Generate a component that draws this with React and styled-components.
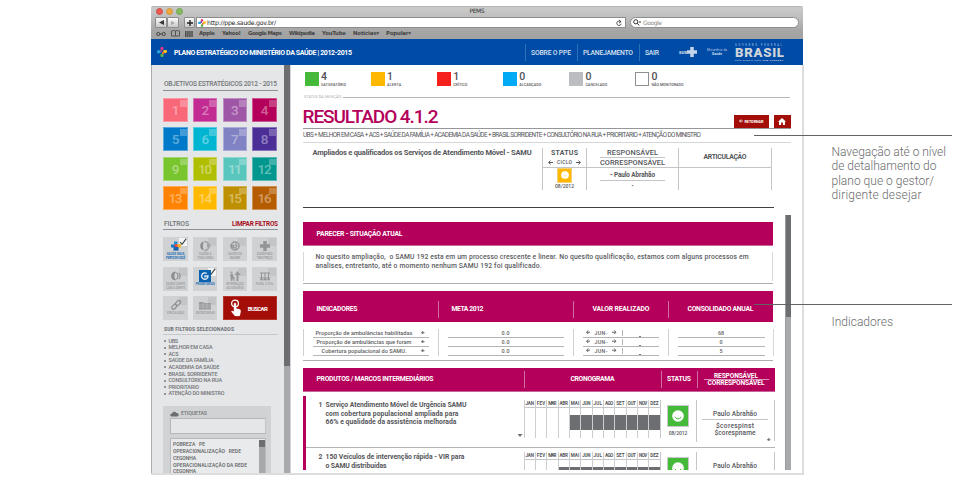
import React, { useLayoutEffect, useRef, useState } from "react";
import styled, { createGlobalStyle } from "styled-components";

const Global = createGlobalStyle`
  * { box-sizing: border-box; }
  body { margin: 0; background: #fff; font-family: Roboto, "Noto Sans", sans-serif; color: #55565a; overflow: hidden; }
`;

const MAGENTA = "#b4005a";
const LINE = "#c4c5c7";

/* Text */
const Label = styled.span`
  display: inline-block;
  flex: none;
  white-space: pre;
  font-size: ${(p) => p.$size || 7}px;
  font-weight: ${(p) => p.$weight || 400};
  line-height: ${(p) => p.$lh || 9}px;
  color: ${(p) => p.$color || "inherit"};
  font-family: ${(p) => p.$font || "inherit"};
`;

// Tracks the text out or in so that it spans the given width.
function Text({ w, size, weight, lh, color, font, children }) {
  const ref = useRef(null);
  const [track, setTrack] = useState(0);
  useLayoutEffect(() => {
    if (!w) return;
    const fit = () => {
      const el = ref.current;
      if (!el) return;
      const n = Math.max(1, el.textContent.length);
      el.style.letterSpacing = "0px";
      el.style.marginRight = "0px";
      const v = (w - el.getBoundingClientRect().width) / Math.max(1, n - 1);
      el.style.letterSpacing = v + "px";
      el.style.marginRight = -v + "px";
      setTrack(v);
    };
    fit();
    document.fonts?.ready.then(fit);
  }, [w, children]);
  return (
    <Label ref={ref} $size={size} $weight={weight} $lh={lh} $color={color} $font={font}
      style={w ? { letterSpacing: track, marginRight: -track } : undefined}>
      {children}
    </Label>
  );
}

/* Page frame */
const Page = styled.div`
  position: relative;
  display: flex;
  width: 956px;
  height: 480px;
  padding: 6px 0 0 151px;
  overflow: hidden;
`;
const Window = styled.div`width: 653px; height: 469px; flex: none; display: flex; flex-direction: column;`;

/* Browser chrome */
const Chrome = styled.div`
  height: 33px;
  width: 652px;
  padding: 0 4px;
  background: linear-gradient(#cbcbcb 0, #bcbcbc 12px, #a5a5a5 24px, #a2a2a2 100%);
  border-top: 1px solid #b4b4b4;
  border-radius: 2px 2px 0 0;
`;
const TitleBar = styled.div`display: grid; grid-template-columns: 1fr auto 1fr; height: 8px; align-items: center;`;
const Lights = styled.div`display: flex; gap: 3px; padding-left: 1px;`;
const Light = styled.i`
  width: 7px; height: 7px; border-radius: 50%;
  background: ${(p) => p.$c};
  border: 1px solid ${(p) => p.$b};
`;
const Toolbar = styled.div`display: flex; height: 11px; margin-top: 2px;`;
const NavButtons = styled.div`display: flex; width: 24px; margin-right: 5px;`;
const ToolButton = styled.div`
  width: 12px; height: 11px; border: 1px solid #8d8d8d; border-radius: 1px;
  background: linear-gradient(#fafafa, #c9c9c9);
  display: flex; align-items: center; justify-content: center;
`;
const Address = styled.div`
  flex: none; width: 430px; height: 11px; margin-left: 1px; background: #fff; border: 1px solid #8d8d8d;
  display: flex; align-items: center; justify-content: space-between; padding: 0 3px 0 1px;
`;
const AddressText = styled.div`display: flex; align-items: center; gap: 1px;`;
const Search = styled.div`
  flex: none; width: 169px; height: 11px; margin-left: 4px; background: #fff; border: 1px solid #8d8d8d; border-radius: 6px;
  display: flex; align-items: center; gap: 2px; padding-left: 2px;
`;
const Bookmarks = styled.div`display: flex; align-items: center; height: 11px; padding-left: 1px;`;
const BookmarkIcons = styled.div`display: flex; gap: 5px; align-items: center; width: 43px; flex: none;`;
const Bookmark = styled.div`width: ${(p) => p.$w}px; flex: none; display: flex;`;

/* Blue header */
const Header = styled.header`
  height: 26px; width: 652px; background: #004ba6; color: #fff; display: flex; align-items: center; padding-left: 6px;
`;
const HeaderTitle = styled.div`width: 358px; padding-left: 7px; display: flex; height: 26px; padding-top: 9.5px; flex: none;`;
const MenuItem = styled.div`
  width: ${(p) => p.$w}px; height: 17px; padding-left: 5px; border-left: 1px solid #2f70bb;
  display: flex; align-items: center; padding-top: 2px; flex: none;
`;
const Sus = styled.div`display: flex; align-items: center; width: 27px; flex: none;`;
const Ministry = styled.div`width: 29px; display: flex; flex-direction: column; align-items: center; padding-right: 7px; flex: none;`;
const Brasil = styled.div`width: 49px; display: flex; flex-direction: column; align-items: flex-start; flex: none; margin-top: 2px;`;

/* Body */
const Body = styled.div`
  display: flex; height: 410px; border: solid #dcddde; border-width: 0 2px 2px 0; background: #fff;
`;
const Sidebar = styled.aside`
  width: 133px; flex: none; background: #e4e6e8; border-left: 1px solid #a9abae; padding: 13px 0 0 11px; overflow: hidden; color: #737477;
`;
const SideHead = styled.div`
  width: 115px; height: ${(p) => p.$h || 12.5}px; margin-top: ${(p) => p.$mt || 0}px; padding: 2px 0 0 1px;
  border-bottom: ${(p) => p.$b || 1}px solid ${(p) => p.$bc || "#8f9093"};
  display: flex; justify-content: space-between; align-items: center;
`;
const TileGrid = styled.div`
  display: grid; grid-template-columns: repeat(4, 24.3px); grid-auto-rows: 24px; gap: ${(p) => p.$gap}px 5.4px; margin: 7.5px 0 0 .4px;
`;
const Tile = styled.div`
  background: ${(p) => p.$c}; border: 1px solid #ffffff55; position: relative;
  display: flex; align-items: center; justify-content: center; padding-top: 1px; color: #ffffff66;
  &::after { content: ""; position: absolute; right: 0; top: 1px; width: 7px; height: 6.5px; background: #ffffff40; }
`;
const Filter = styled.div`
  background: #cfd1d3; position: relative; display: flex; flex-direction: column; align-items: center; padding-top: 3px;
  color: ${(p) => (p.$on ? "#1a6fb8" : "#9fa1a3")};
  svg { display: block; position: relative; }
`;
const Corner = styled.div`position: absolute; right: 1px; top: 1px; width: 8px; height: 8px; background: ${(p) => (p.$on ? "#f4f4f4" : "#c3c5c6")};`;
const BuscarButton = styled.div`
  grid-column: span 2; background: #a30f08; border: 1px solid #b5332d; color: #fff; display: flex; align-items: center; padding-left: 6px; gap: 6px;
`;
const SubList = styled.ul`list-style: none; margin: 3px 0 0 1px; padding: 0; height: 68.5px;`;
const SubItem = styled.li`
  display: flex; align-items: center; height: 6.6px; gap: 2.5px;
  &::before { content: ""; width: 2px; height: 2px; border-radius: 1px; background: #77787b; }
`;
const TagPanel = styled.div`width: 108px; height: 70px; background: #d0d2d4; padding: 3px 6px 0 7px;`;
const TagTitle = styled.div`display: flex; align-items: center; gap: 2px; height: 9px;`;
const TagInput = styled.div`height: 16px; width: 96px; border: 1px solid #b6b8ba; border-right-color: #c2c4c6; background: #e4e6e8;`;
const TagList = styled.div`height: 40px; width: 96px; margin-top: 4px; border: 1px solid #b6b8ba; background: #e8eaeb; display: flex; justify-content: space-between;`;
const TagLines = styled.div`padding: 2px 0 0 2px; display: flex; flex-direction: column; color: #606164;`;
const TagLine = styled.div`height: ${(p) => p.$h}px; display: flex;`;
const TagScroll = styled.div`width: 6px; margin: 1px 0; background: linear-gradient(#6d6e71 7px, #a7a9ac 7px);`;
const SideScroll = styled.div`width: 6px; flex: none; background: linear-gradient(#6d6e72 301px, #a7a9ac 301px);`;

const Main = styled.main`flex: 1; padding: 7px 0 0 11.5px; border-left: 1px solid #d4d5d7; overflow: hidden;`;
const StatusRow = styled.div`display: grid; grid-template-columns: repeat(6, 66.1px); padding-left: 2px; height: 22px;`;
const StatusItem = styled.div`display: flex; gap: 2.5px;`;
const Square = styled.div`width: 14px; height: 14px; background: ${(p) => p.$c}; border: 1px solid ${(p) => p.$b || p.$c}; flex: none;`;
const StatusText = styled.div`display: flex; flex-direction: column; align-items: flex-start;`;
const Selection = styled.div`display: flex; align-items: center; height: 7px; padding-left: 1.5px; gap: 2px; width: 487px; color: #a5a6a8;`;
const Rule = styled.div`flex: 1; height: 1px; background: #b5b6b8;`;
const TitleRow = styled.div`
  width: 488px; height: 27.5px; border-bottom: 1.5px solid #96979a; display: flex; justify-content: space-between; color: ${MAGENTA};
`;
const Actions = styled.div`display: flex; gap: 5px; align-items: flex-end; color: #fff;`;
const Action = styled.div`height: 13px; width: ${(p) => p.$w}px; background: #a30f08; display: flex; align-items: center; justify-content: center; gap: 2px;`;
const Crumbs = styled.div`width: 488px; height: 14px; border-bottom: 1px solid #d5d6d8; display: flex; align-items: center; padding: 1px 0 0 .5px;`;
const Detail = styled.div`width: 471px; height: 65px; border-bottom: 1.5px solid #3f4042; display: flex;`;
const Description = styled.div`width: 239.5px; padding: 5px 0 0 10px; flex: none; display: flex; align-items: flex-start;`;
const DetailTable = styled.div`
  margin-top: 5px; height: 42px; display: grid; grid-template-columns: 44px 92px 93px; grid-template-rows: 20px 22px;
  border-left: 1px solid ${LINE};
`;
const DetailCell = styled.div`
  border-right: 1px solid ${LINE}; border-bottom: ${(p) => (p.$last ? 0 : 1)}px solid ${LINE};
  display: flex; flex-direction: column; align-items: center; justify-content: ${(p) => (p.$top ? "flex-start" : "center")};
  padding-top: ${(p) => p.$pt || 0}px;
`;
const Inline = styled.div`display: flex; align-items: center; gap: ${(p) => p.$gap || 4}px;`;
const Divider = styled.div`width: ${(p) => p.$w}px; height: 1px; background: ${(p) => p.$c || LINE}; flex: none;`;

const ScrollArea = styled.div`display: flex; height: 262px; overflow: hidden;`;
const ScrollContent = styled.div`width: 482.5px; flex: none; padding-top: 14px;`;
const Scrollbar = styled.div`width: 6px; margin-top: 7px; background: linear-gradient(#6d6e72 102px, #a7a9ac 102px); border-left: 1px solid #9a9b9e;`;
const Banner = styled.div`
  width: ${(p) => p.$w || 470}px; height: ${(p) => p.$h}px; margin-top: ${(p) => p.$mt || 0}px; background: ${MAGENTA}; color: #fff;
  border-bottom: ${(p) => (p.$line ? 1 : 0)}px solid #c9649a;
  display: grid; grid-template-columns: ${(p) => p.$cols || "1fr"}; align-items: center;
`;
const BannerCell = styled.div`
  display: flex; flex-direction: column; padding-left: ${(p) => p.$pl || 0}px; margin-top: ${(p) => p.$drop || 0}px;
  align-items: ${(p) => (p.$center ? "center" : "flex-start")}; justify-content: center;
  height: 17px; border-left: ${(p) => (p.$rule ? 1 : 0)}px solid #cf6fa2;
`;
const Opinion = styled.div`
  width: 470px; height: 29px; margin-top: 6px; padding: 1px 0 0 12px; border: solid #d6d7d9; border-width: 0 1px;
  display: flex; flex-direction: column; align-items: flex-start; color: #5a5b5e;
`;
const SectionRule = styled.div`width: ${(p) => p.$w || 470}px; height: 1.5px; background: #adaeb1; margin-top: ${(p) => p.$mt}px;`;
const Indicators = styled.div`
  margin-top: 7px; width: 471px; height: 27px; display: grid; grid-template-columns: 135px 135px 95px 106px;
  border-right: 1px solid #d6d7d9; color: #5d5e61;
`;
const IndicatorCol = styled.div`border-left: 1px solid #cfd0d2; padding: 0 9px; display: flex; flex-direction: column;`;
const IndicatorCell = styled.div`
  height: 9px; border-bottom: 1px solid #b3b4b6; display: flex; align-items: center;
  justify-content: ${(p) => (p.$split ? "space-between" : "center")};
  padding: ${(p) => (p.$split ? "0 4px 0 0" : "0")};
`;
const NameBox = styled.div`width: 103px; display: flex; justify-content: center;`;
const MonthPick = styled.div`
  width: 40.5px; height: 6px; padding: 0 5.5px 0 3px; margin-right: auto; border-right: 1px solid #b3b4b6;
  display: flex; align-items: center; justify-content: space-between;
`;
const Dot = styled.i`width: 2px; height: 1px; background: #77787b; align-self: flex-end; margin-right: 14px;`;

const Products = styled.div`margin-top: 4px; border-left: 3px solid ${MAGENTA}; height: 74px; width: 472px; overflow: hidden;`;
const Product = styled.div`
  height: 52px; border-bottom: 1px solid #b3b4b6; display: grid; grid-template-columns: 218px 137px 36px 78px; padding-top: 4px;
`;
const ProductText = styled.div`display: grid; grid-template-columns: 7px 1fr; padding: 1px 0 0 13px; height: 41px;`;
const ProductLines = styled.div`display: flex; flex-direction: column; align-items: flex-start;`;
const ProductName = styled.div`position: relative;`;
const Toggle = styled.div`position: absolute; right: 1px; bottom: 10px; width: 5px; height: 3px; background: #6d6e71; clip-path: polygon(0 0, 100% 0, 50% 100%);`;
const Gantt = styled.div`display: grid; grid-template-columns: repeat(12, 11.35px); height: 38px; border-right: 1px solid ${LINE};`;
const Month = styled.div`border-left: 1px solid #cdced0; display: flex; flex-direction: column; align-items: center;`;
const MonthName = styled.div`height: 8px; width: 100%; border-bottom: 1px solid #c4c5c7; display: flex; justify-content: center;`;
const Bar = styled.div`width: 100%; height: 15px; margin-top: 7px; background: ${(p) => (p.$on ? "#6d6e72" : "transparent")};`;
const StatusCell = styled.div`display: flex; flex-direction: column; align-items: center; padding-top: 5px; border-right: 1px solid ${LINE}; height: 42px; gap: 1px;`;
const Face = styled.div`
  width: ${(p) => p.$s}px; height: ${(p) => p.$s}px; background: ${(p) => p.$c}; border: 1.5px solid ${(p) => p.$b || "#c8c9cb"};
  display: flex; align-items: center; justify-content: center; flex: none;
`;
const Owner = styled.div`
  height: 41px; border-right: 1px solid ${LINE}; display: flex; flex-direction: column; align-items: center; padding-top: 10px; position: relative;
`;
const CoOwner = styled.div`display: flex; flex-direction: column; align-items: center; margin-top: 3px;`;
const PlusMark = styled.div`position: absolute; right: 3px; bottom: 0; display: flex;`;

/* Callouts */
const Notes = styled.div`padding-left: 27.5px; color: #6b6c6e;`;
const Note = styled.div`display: flex; flex-direction: column; align-items: flex-start; margin-top: ${(p) => p.$mt}px; height: 58px;`;
const Leader = styled.div`position: absolute; left: 754px; top: ${(p) => p.$y}px; width: 198px; height: 1px; background: #626365;`;

/* Icons */
const Flower = ({ s = 11 }) => (
  <svg width={s} height={s} viewBox="0 0 12 12">
    <rect x="4.2" y="0" width="3.6" height="4" rx="1.5" fill="#e8357f" />
    <rect x="0" y="4" width="4.5" height="3.6" rx="1.5" fill="#20a8e0" />
    <rect x="7.5" y="3.5" width="4.5" height="3.6" rx="1.5" fill="#f8c41c" />
    <rect x="4.2" y="8" width="3.6" height="4" rx="1.5" fill="#58b947" />
    <path d="M3.5 3.5h2.5v2.5h-2.5z" fill="#7e4fa0" />
    <path d="M6 6h2.6v2.6h-2.6z" fill="#ef6a35" />
  </svg>
);
const Arrow = ({ left, s = 5, c = "#55565a" }) => (
  <svg width={s} height={s} viewBox="0 0 10 10" fill="none" stroke={c} strokeWidth="2">
    {left ? <path d="M10 5H1.5M5 1L1.5 5L5 9" /> : <path d="M0 5h8.5M5 1l3.5 4L5 9" />}
  </svg>
);
const Plus = ({ s = 4, c = "#66676a", t = 2.2 }) => (
  <svg width={s} height={s} viewBox="0 0 8 8" stroke={c} strokeWidth={t}><path d="M4 0v8M0 4h8" /></svg>
);
const Smile = ({ s, c }) => (
  <svg width={s} height={s} viewBox="0 0 12 12">
    <circle cx="6" cy="6" r="5.8" fill="#fff" />
    <path d="M2.8 6.8Q6 11.2 9.2 6.8" fill="none" stroke={c} strokeWidth="1" />
  </svg>
);
const Neutral = ({ s, c }) => (
  <svg width={s} height={s} viewBox="0 0 12 12">
    <circle cx="6" cy="6" r="5.8" fill="#fff" />
    <path d="M3.4 7.2h5.2" stroke={c} strokeWidth="1" />
  </svg>
);
const Check = () => (
  <svg width="8" height="8" viewBox="0 0 8 8"><path d="M1 4l2 2.4L7.3 .6" fill="none" stroke="#3f4042" strokeWidth="1.1" /></svg>
);

const ICONS = {
  mais: <><path d="M4 1.5h3.5v3H4z" fill="#1c8fd6" /><path d="M1 4.5h4v3H1z" fill="#1778c2" /><path d="M6 4.2h5v3.3H6z" fill="#f0b51c" /><path d="M3.5 7h5v3.6h-5z" fill="#1464ad" /><path d="M4.6 4.2h2.8v2.8H4.6z" fill="#e8404d" /></>,
  toda: <><path d="M4.8 1.6a4.5 4.5 0 0 0 0 8.8L4 7.6V4.4z" fill="#8d8f91" /><path d="M5.5 1.6a4.2 4.2 0 0 1 0 8.8" fill="none" stroke="#9b9d9f" strokeWidth="1.5" /><path d="M8 4h3.4v3.6H8z" fill="#a3a5a7" /></>,
  mulher: <><circle cx="6" cy="6" r="4" fill="none" stroke="#97999b" strokeWidth="1.5" /><path d="M6 3.6a2 2 0 0 1 1 3.7v2.2M5 8h3M2 5h3v3H3z" fill="#a5a7a9" stroke="#8f9193" strokeWidth=".8" /></>,
  cruz: <path d="M4.3 1h3.4v3.2H11v3.6H7.7V11H4.3V7.8H1V4.2h3.3z" fill="#939597" />,
  conte: <><path d="M5.5 2a4 4 0 0 0 0 8L4 7.8V4.2z" fill="#8d8f91" stroke="#8d8f91" /><path d="M6.5 2.5q3 3.5 0 7M9 2.8q2.2 3.2 0 6.4" fill="none" stroke="#97999b" strokeWidth="1.3" /></>,
  inter: <><path d="M1 4h3v2l1.5 1V11h-1l-.5-3-1 3h-1zM8.5 1L11.5 5h-2v6h-2V5h-2z" fill="#97999b" /><circle cx="2.5" cy="2.5" r="1" fill="#97999b" /></>,
  familia: <><path d="M1 3h10M1 9.8h10M2.5 3v7M6 3v7M9.5 3v7M1 7.2l1.5 2 1.5-2M4.5 7.2L6 9.2l1.5-2M8 7.2l1.5 2 1.5-2" fill="none" stroke="#8d8f91" strokeWidth=".9" /></>,
  link: <g fill="none" stroke="#8d8f91" strokeWidth="1.2"><rect x="-2.8" y="-1.7" width="5.6" height="3.4" rx="1.7" transform="translate(8 4) rotate(-45)" /><rect x="-2.8" y="-1.7" width="5.6" height="3.4" rx="1.7" transform="translate(4.2 7.8) rotate(-45)" /></g>,
  pasta: <><path d="M0 3h4l1 1h7v6.5H0z" fill="#97999b" /><path d="M0 6h12M0 8.2h12M4 4v6M8 4v6" stroke="#c5c7c9" strokeWidth=".6" /></>,
  alvo: <><path d="M0 0h12v12H0z" fill="#0a62ae" /><path d="M7.7 3.5A3.2 3.2 0 1 0 9 6H6V7.4" fill="none" stroke="#dbe9f5" strokeWidth="1.4" /></>,
};
const FILTERS = [
  ["mais", "SAÚDE MAIS", "PERTO DE VOCÊ", true], ["toda", "SAÚDE A", "TODA HORA"], ["mulher", "SAÚDE DA", "MULHER"], ["cruz", "SAÚDE NÃO", "TEM PREÇO"],
  ["conte", "SAÚDE CONTE", "COM A GENTE"], ["alvo", "PRIORITÁRIOS", "", true], ["inter", "INTEGRAÇÃO", "AO USUÁRIO"], ["familia", "PARA CIVIL", ""],
  ["link", "VINCULADAS", ""], ["pasta", "SECRETARIAS", ""],
];
const TILES = ["#f96879", "#c22b92", "#9f56a6", "#b4005a", "#007ac8", "#00b5d1", "#8082c3", "#4b2e98", "#79c52d", "#b0be00", "#58c6bc", "#00978f", "#ff8200", "#ffb900", "#be8f00", "#b55c00"];
const STATUSES = [
  ["4", "SATISFATÓRIO", "#45b93a", 25], ["1", "ALERTA", "#ffb800", 14], ["1", "CRÍTICO", "#f6201c", 14],
  ["0", "ALCANÇADO", "#00aaf4", 22], ["0", "CANCELADO", "#bcbdc1", 22], ["0", "NÃO MONITORADO", "#fff", 32, "#8f9093"],
];
const SUBS = [["UBS", 9.5], ["MELHOR EM CASA", 44], ["ACS", 10], ["SAÚDE DA FAMÍLIA", 45], ["ACADEMIA DA SAÚDE", 51], ["BRASIL SORRIDENTE", 49], ["CONSULTÓRIO NA RUA", 53.5], ["PRIORITARIO", 30.5], ["ATENÇÃO DO MINISTRO", 56]];
const MARKS = [["Apple", 23, 16], ["Yahoo!", 26, 19], ["Google Maps", 41, 34], ["Wikipedia", 33, 26], ["YouTube", 31, 24], ["Notícias▾", 33, 26], ["Popular▾", 30, 25]];
const MONTHS = ["JAN", "FEV", "MAR", "ABR", "MAI", "JUN", "JUL", "AGO", "SET", "OUT", "NOV", "DEZ"];
const PRODUCTS = [
  { n: "1", lines: [["Serviço Atendimento Móvel de Urgência SAMU", 141], ["com cobertura populacional ampliada para", 133], ["66% e qualidade da assistência melhorada", 131]], from: 4, date: "08/2012", co: [["$corespinst", 38], ["$corespname", 41]] },
  { n: "2", lines: [["150 Veículos de intervenção rápida - VIR para", 139], ["o SAMU distribuídas", 61]], from: 3, co: [] },
];
const VERD = '"DejaVu Sans", sans-serif';

function BrowserChrome() {
  return (
    <Chrome>
      <TitleBar>
        <Lights><Light $c="#ee5a50" $b="#c8504a" /><Light $c="#f2a93b" $b="#cd9440" /><Light $c="#86bd5c" $b="#6fa252" /></Lights>
        <Text size={6} w={15} weight={500} font={VERD} color="#333" lh={8}>PEMS</Text>
      </TitleBar>
      <Toolbar>
        <NavButtons>
          <ToolButton><svg width="5" height="5" viewBox="0 0 5 5"><path d="M5 0v5L0 2.5z" fill="#333" /></svg></ToolButton>
          <ToolButton><svg width="4" height="4" viewBox="0 0 5 5"><path d="M0 0v5L5 2.5z" fill="#aaa" /></svg></ToolButton>
        </NavButtons>
        <ToolButton><Plus s={6} c="#222" t={1.8} /></ToolButton>
        <Address>
          <AddressText><Flower s={8} /><Text size={6.2} w={69} font={VERD} color="#222">http://ppe.saude.gov.br/</Text></AddressText>
          <svg width="6" height="6" viewBox="0 0 8 8"><path d="M6.5 2.5A3 3 0 1 0 7 5M4 0l2.8 2.4L4 4" fill="none" stroke="#333" strokeWidth="1.1" /></svg>
        </Address>
        <Search>
          <svg width="8" height="7" viewBox="0 0 8 7"><circle cx="2.8" cy="2.8" r="2.1" fill="none" stroke="#333" /><path d="M4.2 4.2l2 2.2M6 3h2" stroke="#333" /></svg>
          <Text size={6} w={19} font={VERD} color="#888">Google</Text>
        </Search>
      </Toolbar>
      <Bookmarks>
        <BookmarkIcons>
          <svg width="10" height="5" viewBox="0 0 10 5" fill="none" stroke="#444"><circle cx="2.3" cy="3" r="1.6" /><circle cx="7.7" cy="3" r="1.6" /><path d="M4 3h2" /></svg>
          <svg width="9" height="7" viewBox="0 0 9 7" fill="none" stroke="#555"><path d="M.5 1q2-1 4 0q2-1 4 0v5h-8zM4.5 1v5" /></svg>
          <svg width="8" height="6" viewBox="0 0 8 6" stroke="#333" strokeWidth="1.4" strokeDasharray="1.5 .6"><path d="M0 1h8M0 3h8M0 5h8" /></svg>
        </BookmarkIcons>
        {MARKS.map(([t, bw, w]) => <Bookmark key={t} $w={bw}><Text size={5.4} w={w} weight={700} font={VERD} color="#444">{t}</Text></Bookmark>)}
      </Bookmarks>
    </Chrome>
  );
}

function TopBar() {
  return (
    <Header>
      <Flower s={10} />
      <HeaderTitle><Text size={7} weight={700} w={178}>PLANO ESTRATÉGICO DO MINISTÉRIO DA SAÚDE | 2012-2015</Text></HeaderTitle>
      {[["SOBRE O PPE", 52, 40], ["PLANEJAMENTO", 62, 50], ["SAIR", 40, 14]].map(([t, bw, w]) => (
        <MenuItem key={t} $w={bw}><Text size={6.8} weight={500} w={w} color="#d6e1f0">{t}</Text></MenuItem>
      ))}
      <Sus><Text size={4} weight={900} w={8} color="#d6e1f0">SUS</Text><Plus s={10} c="#c6d6ea" t={2.8} /></Sus>
      <Ministry>
        <Text size={3} w={20} lh={4} color="#c2d2e8">Ministério da</Text>
        <Text size={3.2} w={10} weight={700} lh={4} color="#dbe5f2">Saúde</Text>
      </Ministry>
      <Brasil>
        <Text size={2.6} w={47} lh={3} color="#b8cbe4">GOVERNO FEDERAL</Text>
        <Text size={13.2} weight={900} w={49} lh={12} color="#ced3d8">BRASIL</Text>
        <Text size={2.4} w={48} weight={700} lh={3} color="#c8d6e8">PAÍS RICO É PAÍS SEM POBREZA</Text>
      </Brasil>
    </Header>
  );
}

function SidePanel() {
  return (
    <Sidebar>
      <SideHead><Text size={6.6} w={113} weight={500}>OBJETIVOS ESTRATÉGICOS 2012 - 2015</Text></SideHead>
      <TileGrid $gap={5.3}>
        {TILES.map((c, i) => <Tile key={c} $c={c}><Text size={13.5} lh={15} weight={500} w={i < 9 ? 0 : 14}>{String(i + 1)}</Text></Tile>)}
      </TileGrid>
      <SideHead $mt={7.5}>
        <Text size={6.8} w={25} weight={500}>FILTROS</Text>
        <Text size={6.4} w={46} weight={700} color="#a6101d">LIMPAR FILTROS</Text>
      </SideHead>
      <TileGrid $gap={5.4}>
        {FILTERS.map(([icon, a, b, on]) => (
          <Filter key={icon} $on={on}>
            <Corner $on={on}>{on && <Check />}</Corner>
            <svg width="12" height="12" viewBox="0 0 12 12">{ICONS[icon]}</svg>
            <Text size={2.9} weight={700} w={Math.min(19, a.length * 1.75)} lh={4}>{a}</Text>
            {b && <Text size={2.9} weight={700} w={Math.min(19, b.length * 1.75)} lh={4}>{b}</Text>}
          </Filter>
        ))}
        <BuscarButton>
          <svg width="12" height="18" viewBox="0 0 12 18" fill="none" stroke="#fff">
            <circle cx="5" cy="4.5" r="3.4" strokeWidth="1.3" />
            <path d="M4 4.5q1-1 2 0V9.5l4 1q1 .6.6 2.4l-1 4.1H5L1.3 12.4q.6-1 2.7.2z" fill="#fff" strokeWidth=".3" />
          </svg>
          <Text size={6} weight={700} w={20}>BUSCAR</Text>
        </BuscarButton>
      </TileGrid>
      <SideHead $mt={3} $h={11.5} $b={1.5} $bc="#c6c8ca"><Text size={5} weight={800} w={70}>SUB FILTROS SELECIONADOS</Text></SideHead>
      <SubList>{SUBS.map(([t, w]) => <SubItem key={t}><Text size={5.4} weight={500} w={w} lh={6.6}>{t}</Text></SubItem>)}</SubList>
      <TagPanel>
        <TagTitle>
          <svg width="9" height="6" viewBox="0 0 9 6"><path d="M1.5 5.5a1.4 1.4 0 0 1 .3-2.8A2.4 2.4 0 0 1 6.3 2a1.8 1.8 0 0 1 1 3.5z" fill="#6d6e71" /></svg>
          <Text size={5.2} weight={500} w={26}>ETIQUETAS</Text>
        </TagTitle>
        <TagInput />
        <TagList>
          <TagLines>
            {[["POBREZA   PE", 32, 7], ["OPERACIONALIZAÇÃO   REDE", 68, 7], ["CEGONHA", 23, 7.2], ["OPERACIONALIZAÇÃO DA REDE", 74, 5.5], ["CEGONHA", 23, 6]].map(([t, w, h], i) => (
              <TagLine key={i} $h={h}><Text size={5} weight={500} w={w} lh={6}>{t}</Text></TagLine>
            ))}
          </TagLines>
          <TagScroll />
        </TagList>
      </TagPanel>
    </Sidebar>
  );
}

function ResultHead() {
  return (
    <>
      <StatusRow>
        {STATUSES.map(([n, t, c, w, b]) => (
          <StatusItem key={t}>
            <Square $c={c} $b={b} />
            <StatusText><Text size={10.5} weight={500} lh={10.5} color="#505154">{n}</Text><Text size={3.7} w={w} lh={4.5} weight={500}>{t}</Text></StatusText>
          </StatusItem>
        ))}
      </StatusRow>
      <Selection><Text size={3.6} w={37} lh={5}>STATUS DA SELEÇÃO</Text><Rule /></Selection>
      <TitleRow>
        <Text size={19} weight={500} lh={31} w={136}>RESULTADO 4.1.2</Text>
        <Actions>
          <Action $w={35}><Arrow left s={4} c="#fff" /><Text size={3.8} weight={700} w={19}>RETORNAR</Text></Action>
          <Action $w={17}><svg width="8" height="7" viewBox="0 0 8 7"><path d="M4 0l4 3.7H7V7H4.9V4.6H3.1V7H1V3.7H0z" fill="#fff" /></svg></Action>
        </Actions>
      </TitleRow>
      <Crumbs><Text size={6.4} w={398}>UBS + MELHOR EM CASA + ACS + SAÚDE DA FAMÍLIA + ACADEMIA DA SAÚDE + BRASIL SORRIDENTE + CONSULTÓRIO NA RUA + PRIORITARIO + ATENÇÃO DO MINISTRO</Text></Crumbs>
      <Detail>
        <Description><Text size={7.5} weight={700} w={219}>Ampliados e qualificados os Serviços de Atendimento Móvel - SAMU</Text></Description>
        <DetailTable>
          <DetailCell $pt={1}>
            <Text size={7} weight={700} w={27}>STATUS</Text>
            <Inline><Arrow left /><Text size={5} weight={500} w={15}>CICLO</Text><Arrow /></Inline>
          </DetailCell>
          <DetailCell $top>
            <Text size={7.4} weight={500} w={51}>RESPONSÁVEL</Text><Divider $w={65} /><Text size={7.4} weight={500} w={65}>CORRESPONSÁVEL</Text>
          </DetailCell>
          <DetailCell><Text size={6.8} weight={700} w={43}>ARTICULAÇÃO</Text></DetailCell>
          <DetailCell $last><Face $s={15} $c="#ffb800" $b="#f3cf7c"><Neutral s={8} c="#ffd874" /></Face><Text size={5} weight={500} w={19} lh={7}>08/2012</Text></DetailCell>
          <DetailCell $last $top $pt={3}><Text size={6.4} weight={700} w={45} lh={9}>- Paulo Abrahão</Text><Divider $w={65} /><Text size={6.4} weight={500} lh={11}>-</Text></DetailCell>
          <DetailCell $last />
        </DetailTable>
      </Detail>
    </>
  );
}

function Results() {
  return (
    <ScrollArea>
      <ScrollContent>
        <Banner $h={24} $line><BannerCell $pl={14} $drop={2}><Text weight={700} size={6.8} w={86}>PARECER - SITUAÇÃO ATUAL</Text></BannerCell></Banner>
        <Opinion>
          <Text size={6.8} weight={500} lh={9.6} w={433}>No quesito ampliação,  o SAMU 192 esta em um processo crescente e linear. No quesito qualificação, estamos com alguns processos em</Text>
          <Text size={6.8} weight={500} lh={9.6} w={226}>analises, entretanto, até o momento nenhum SAMU 192 foi qualificado.</Text>
        </Opinion>
        <SectionRule $mt={2} />
        <Banner $h={31} $mt={6.5} $cols="135px 135px 95px 105px">
          <BannerCell $pl={14} $drop={6}><Text weight={700} size={6.8} w={41}>INDICADORES</Text></BannerCell>
          <BannerCell $rule $pl={13} $drop={6}><Text weight={700} size={6.8} w={32}>META 2012</Text></BannerCell>
          <BannerCell $rule $pl={19} $drop={6}><Text weight={700} size={6.8} w={57}>VALOR REALIZADO</Text></BannerCell>
          <BannerCell $rule $pl={19} $drop={6}><Text weight={700} size={6.8} w={66}>CONSOLIDADO ANUAL</Text></BannerCell>
        </Banner>
        <Indicators>
          <IndicatorCol>
            {[["Proporção de ambulâncias habilitadas", 97], ["Proporção de ambulâncias que foram", 95], ["Cobertura populacional do SAMU.", 85]].map(([t, w]) => (
              <IndicatorCell key={t} $split><NameBox><Text size={5.6} weight={500} w={w} lh={8}>{t}</Text></NameBox><Plus s={3.5} /></IndicatorCell>
            ))}
          </IndicatorCol>
          <IndicatorCol>{[0, 1, 2].map((i) => <IndicatorCell key={i}><Text size={5.4} weight={500} w={8} lh={8}>0.0</Text></IndicatorCell>)}</IndicatorCol>
          <IndicatorCol>
            {[0, 1, 2].map((i) => (
              <IndicatorCell key={i} $split><MonthPick><Arrow left s={4.5} /><Text size={5.2} weight={500} w={13} lh={8}>JUN-</Text><Arrow s={4.5} /></MonthPick><Dot /></IndicatorCell>
            ))}
          </IndicatorCol>
          <IndicatorCol>{["68", "0", "5"].map((t) => <IndicatorCell key={t}><Text size={5.4} weight={500} lh={8}>{t}</Text></IndicatorCell>)}</IndicatorCol>
        </Indicators>
        <SectionRule $mt={4} />
        <Banner $w={472} $h={24} $mt={7} $cols="221px 137px 36px 78px" $line>
          <BannerCell $pl={14}><Text weight={700} size={6.8} w={117}>PRODUTOS / MARCOS INTERMEDIÁRIOS</Text></BannerCell>
          <BannerCell $rule $center><Text weight={700} size={6.8} w={44}>CRONOGRAMA</Text></BannerCell>
          <BannerCell $rule $center><Text weight={700} size={6.8} w={24}>STATUS</Text></BannerCell>
          <BannerCell $rule $center><Text weight={700} size={6.6} w={44} lh={6}>RESPONSÁVEL</Text><Divider $w={65} $c="#dc91b8" /><Text weight={700} size={6.6} w={57} lh={6}>CORRESPONSÁVEL</Text></BannerCell>
        </Banner>
        <Products>
          {PRODUCTS.map((p) => (
            <Product key={p.n}>
              <ProductName>
                <ProductText>
                  <Text size={6.8} weight={700}>{p.n}</Text>
                  <ProductLines>{p.lines.map(([t, w]) => <Text key={t} size={6.8} weight={700} w={w} lh={8.6}>{t}</Text>)}</ProductLines>
                </ProductText>
                <Toggle />
              </ProductName>
              <Gantt>
                {MONTHS.map((m, i) => (
                  <Month key={m}><MonthName><Text size={4.6} weight={700} w={8.4} lh={7.5}>{m}</Text></MonthName><Bar $on={i >= p.from} /></Month>
                ))}
              </Gantt>
              <StatusCell><Face $s={22} $c="#45b93a"><Smile s={12} c="#45b93a" /></Face>{p.date && <Text size={5} weight={500} w={18.5} lh={10}>{p.date}</Text>}</StatusCell>
              <Owner>
                <Text size={6.6} weight={500} w={44}>Paulo Abrahão</Text>
                <Divider $w={66} />
                <CoOwner>{p.co.map(([t, w]) => <Text key={t} size={6.6} weight={500} w={w} lh={7}>{t}</Text>)}</CoOwner>
                <PlusMark><Plus s={3.5} /></PlusMark>
              </Owner>
            </Product>
          ))}
        </Products>
      </ScrollContent>
      <Scrollbar />
    </ScrollArea>
  );
}

export default function App() {
  return (
    <>
      <Global />
      <Page>
        <Window>
          <BrowserChrome />
          <TopBar />
          <Body>
            <SidePanel />
            <SideScroll />
            <Main><ResultHead /><Results /></Main>
          </Body>
        </Window>
        <Notes>
          <Note $mt={139}>
            {[["Navegação até o nível", 114.5], ["de detalhamento do", 105], ["plano que o gestor/", 102.5], ["dirigente desejar", 90]].map(([t, w]) => (
              <Text key={t} size={12} weight={300} lh={14.4} w={w}>{t}</Text>
            ))}
          </Note>
          <Note $mt={111.5}><Text size={12} weight={300} lh={14.4} w={61.5}>Indicadores</Text></Note>
        </Notes>
        <Leader $y={135} />
        <Leader $y={304} />
      </Page>
    </>
  );
}
